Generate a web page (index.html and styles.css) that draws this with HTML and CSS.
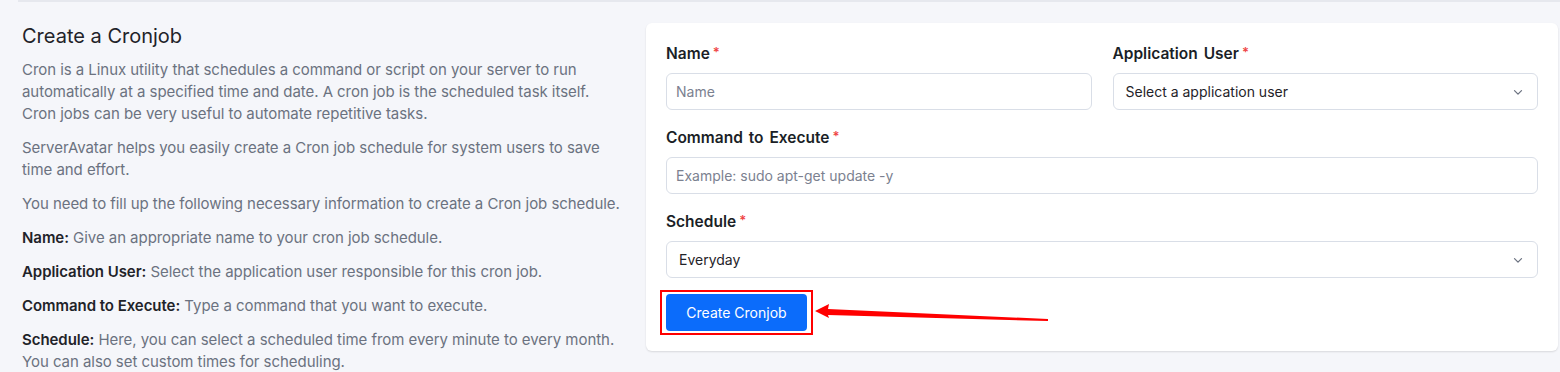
FILE: index.html
```html
<!DOCTYPE html>
<html lang="en">
<head>
    <title>Create a Cronjob</title>
    <meta name="viewport" content="width=device-width, initial-scale=1.0">
    <link rel="stylesheet" href="styles.css">
</head>
<body>
    <div class="topline"></div>
    <div class="page">
        <div class="info">
            <h2>Create a Cronjob</h2>
            <p>Cron is a Linux utility that schedules a command or script on your server to run automatically at a specified time and date. A cron job is the scheduled task itself. Cron jobs can be very useful to automate repetitive tasks.</p>
            <p>ServerAvatar helps you easily create a Cron job schedule for system users to save time and effort.</p>
            <p>You need to fill up the following necessary information to create a Cron job schedule.</p>
            <p><b>Name:</b> Give an appropriate name to your cron job schedule.</p>
            <p><b>Application User:</b> Select the application user responsible for this cron job.</p>
            <p><b>Command to Execute:</b> Type a command that you want to execute.</p>
            <p><b>Schedule:</b> Here, you can select a scheduled time from every minute to every month. You can also set custom times for scheduling.</p>
        </div>
        <div class="card">
            <div class="row">
                <div class="field">
                    <label>Name<span class="req">*</span></label>
                    <div class="input placeholder">Name</div>
                </div>
                <div class="field">
                    <label>Application User<span class="req">*</span></label>
                    <div class="input select">
                        <span>Select a application user</span>
                        <svg width="14" height="14" viewBox="0 0 20 20"><path d="M5 8l5 5 5-5" fill="none" stroke="#6b7280" stroke-width="1.8" stroke-linecap="round" stroke-linejoin="round"/></svg>
                    </div>
                </div>
            </div>
            <div class="field">
                <label>Command to Execute<span class="req">*</span></label>
                <div class="input placeholder">Example: sudo apt-get update -y</div>
            </div>
            <div class="field">
                <label>Schedule<span class="req">*</span></label>
                <div class="input select">
                    <span>Everyday</span>
                    <svg width="14" height="14" viewBox="0 0 20 20"><path d="M5 8l5 5 5-5" fill="none" stroke="#6b7280" stroke-width="1.8" stroke-linecap="round" stroke-linejoin="round"/></svg>
                </div>
            </div>
            <div class="actions">
                <div class="highlight">
                    <button class="btn">Create Cronjob</button>
                </div>
            </div>
        </div>
    </div>
    <svg class="arrow" width="1560" height="372" viewBox="0 0 1560 372">
        <polygon points="815,311 829,304 828,309 1048,319 1048,321 828,315 829,318" fill="#f00"/>
    </svg>
</body>
</html>
```

FILE: styles.css
```css
body {
    margin: 0px;
    background-color: #f5f6fa;
    font-family: Inter, "Noto Sans", sans-serif;
    position: relative;
    height: 372px;
    overflow: hidden;
}
.topline {
    margin-left: 18px;
    height: 2px;
    background: #e6e8ee;
}
.page {
    display: flex;
    align-items: flex-start;
    gap: 22px;
    padding: 21px 2px 0 22px;
}
.info {
    width: 602px;
    flex-shrink: 0;
}
.info h2 {
    margin: 0 0 10px 0;
    font-size: 20px;
    font-weight: 400;
    line-height: 26px;
    color: #1f2329;
}
.info p {
    margin: 0 0 12px 0;
    font-size: 15px;
    line-height: 22px;
    color: #6b7280;
    letter-spacing: -0.05px;
}
.info b {
    color: #1f2329;
    font-weight: 600;
}
.card {
    flex: 1;
    background: #fff;
    border-radius: 6px;
    box-shadow: 0 1px 2px rgba(0, 0, 0, 0.12);
    padding: 20px 20px 16px 20px;
}
.row {
    display: flex;
    gap: 21px;
}
.row .field {
    flex: 1;
}
.field {
    margin-bottom: 17px;
}
.field label {
    display: block;
    font-size: 15.5px;
    font-weight: 600;
    line-height: 22px;
    word-spacing: 2px;
    color: #1b1f27;
    margin-bottom: 8px;
}
.req {
    color: #ef4444;
    margin-left: 3px;
    font-size: 13px;
    position: relative;
    top: -2px;
}
.input {
    height: 37px;
    box-sizing: border-box;
    border: 1px solid #d9dee7;
    border-radius: 6px;
    padding: 0 12px 0 9px;
    display: flex;
    align-items: center;
    font-size: 14px;
}
.placeholder {
    color: #7b8190;
}
.select {
    justify-content: space-between;
    color: #1f2329;
    padding-left: 12px;
}
.highlight {
    display: inline-block;
    border: 2px solid #f00;
    padding: 2px 4px;
    margin-left: -6px;
    margin-top: -5px;
}
.btn {
    display: block;
    width: 141px;
    height: 37px;
    background: #0b6cfb;
    color: #fff;
    border: 0;
    border-radius: 4px;
    font-family: Inter, "Noto Sans", sans-serif;
    font-size: 14px;
}
.arrow {
    position: absolute;
    top: 0;
    left: 0;
    pointer-events: none;
}
```
